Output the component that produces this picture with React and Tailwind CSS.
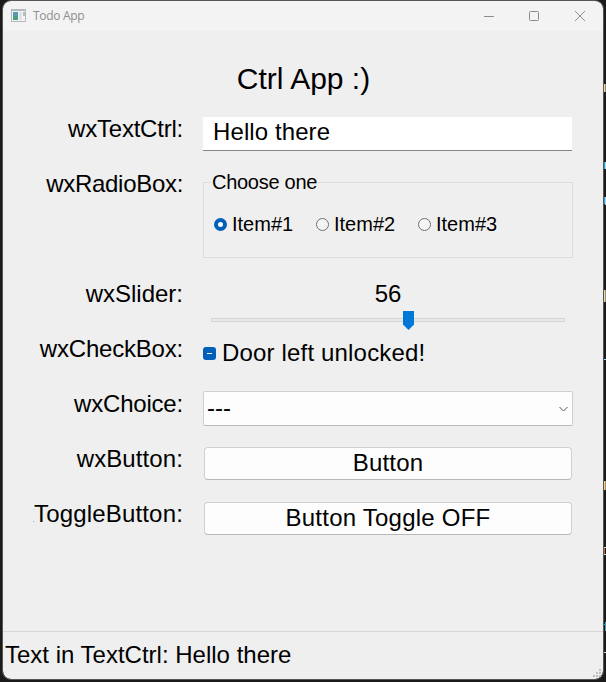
const ARIAL = "font-['Liberation_Sans',Arial,sans-serif]";

function Row({ label, className, labelClass = "", children }) {
  return (
    <div className={`flex ${className}`}>
      <div className="flex h-7 w-[150px] shrink-0 justify-end overflow-hidden whitespace-nowrap">
        <span className={`leading-7 ${labelClass}`}>{label}</span>
      </div>
      <div className="ml-5 w-[370px]">{children}</div>
    </div>
  );
}

function Radio({ label, checked, className = "" }) {
  return (
    <label className={`flex items-center ${className}`}>
      {checked ? (
        <span className="size-[13px] rounded-full border-4 border-[#005fb8] bg-white" />
      ) : (
        <span className="size-[13px] rounded-full border border-[#707070] bg-[#f5f5f5]" />
      )}
      <span className="ml-[5px] whitespace-nowrap">{label}</span>
    </label>
  );
}

function TitleBar() {
  return (
    <header className="flex h-[30px] items-center bg-[#f3f3f3] pl-2">
      <svg className="-mt-[2px]" width="15" height="13" viewBox="0 0 15 13" shapeRendering="crispEdges">
        <rect width="15" height="13" fill="#b3b9be" />
        <rect x="1" y="2" width="13" height="10" fill="#f4f4f4" />
        <rect x="2" y="3" width="5" height="8" fill="#5a98b4" />
        <rect x="2" y="7" width="5" height="4" fill="#4c9c86" />
        <rect x="8" y="3" width="3" height="8" fill="#dfe1e3" />
        <rect x="12" y="3" width="2" height="4" fill="#a5c5b5" />
      </svg>
      <span className="ml-[7px] font-['Open_Sans','Noto_Sans',sans-serif] text-[12px] tracking-[-0.3px] text-[#8f8f8f]">
        Todo App
      </span>
      <svg className="-mt-[2px] ml-auto mr-[17px]" width="103" height="12" viewBox="0 0 103 12" fill="none" stroke="#8c8c8c">
        <path d="M1 7.5h10" />
        <rect x="46.5" y="2.5" width="9" height="9" rx="1" />
        <path d="M92 2l10 10M102 2L92 12" />
      </svg>
    </header>
  );
}

// Slivers of the editor window that lies behind the right edge.
function EditorEdge() {
  return (
    <svg className="absolute right-0 top-0" width="2" height="682" shapeRendering="crispEdges">
      <path d="M0 84h1v8H0zM0 290h1v12H0z" fill="#c8dff0" />
      <path d="M1 84h1v8H1zM1 290h1v12H1zM1 481h1v9H1z" fill="#b38a3c" />
      <path d="M0 162h1v7H0zM0 197h1v7H0z" fill="#2f9fd6" />
      <path d="M1 162h1v7H1zM1 197h1v8H1zM0 359h2v1H0z" fill="#9fdcf0" />
      <path d="M0 481h1v9H0z" fill="#e8d2b0" />
      <path d="M0 547h2v1H0zM0 554h2v1H0zM0 652h2v1H0z" fill="#d8d8d0" />
      <path d="M0 548h1v6H0z" fill="#b06a4a" />
      <path d="M1 622h1v9H1zM0 624h1v1H0z" fill="#3aa0c0" />
    </svg>
  );
}

export default function App() {
  return (
    <div className={`relative h-[682px] w-[606px] overflow-hidden bg-[#1b1b1b] pl-[3px] pt-px ${ARIAL}`}>
      <EditorEdge />
      <div className="flex h-[678px] w-[600px] flex-col overflow-hidden rounded-lg bg-[#efefef] text-[24px] text-black outline outline-[#555]">
        <TitleBar />
        <main className="flex h-[600px] flex-col pl-[30px]">
          <h1 className="mt-[30px] h-9 w-[541px] text-center text-[30px] leading-9">Ctrl App :)</h1>
          <Row label="wxTextCtrl:" className="mt-[18px] h-[55px]" labelClass="tracking-[-0.22px]">
            <div className="mt-[2px] h-[34px] w-[369px] border-b border-[#868686] bg-white pl-[10px]">
              <div className="pt-px leading-7 tracking-[0.1px]">Hello there</div>
            </div>
          </Row>
          <Row label="wxRadioBox:" className="h-[110px]" labelClass="tracking-[-0.3px]">
            <fieldset className="h-[88px] border border-[#dcdcdc] pl-[10px] text-[20px]">
              <legend className="-ml-[3px] px-[1px] leading-[25px] tracking-[-0.28px]">Choose one</legend>
              <div className="mt-[17px] flex h-6 leading-6">
                <Radio label="Item#1" checked className="w-[102px]" />
                <Radio label="Item#2" className="w-[102px]" />
                <Radio label="Item#3" />
              </div>
            </fieldset>
          </Row>
          <Row label="wxSlider:" className="h-[55px]">
            <div className="text-center leading-7">56</div>
            <div className="mx-2 mt-[3px] flex h-[19px] items-start">
              <div className="mt-[7px] h-1 w-48 border border-r-0 border-[#d3d6d5] bg-[#e7eaea]" />
              <svg width="11" height="19" viewBox="0 0 11 19">
                <path d="M0 0h11v13.5L5.5 19 0 13.5z" fill="#0078d7" />
              </svg>
              <div className="mt-[7px] h-1 flex-1 border border-l-0 border-[#d3d6d5] bg-[#e7eaea]" />
            </div>
          </Row>
          <Row label="wxCheckBox:" className="h-[55px]" labelClass="tracking-[-0.2px]">
            <label className="mt-1 flex h-7 items-center">
              <span className="flex size-[13px] items-center justify-center rounded-[3px] bg-[#005fb8]">
                <span className="h-px w-[5px] bg-white" />
              </span>
              <span className="ml-[6px] whitespace-nowrap leading-7 tracking-[0.17px]">Door left unlocked!</span>
            </label>
          </Row>
          <Row label="wxChoice:" className="h-[55px]" labelClass="tracking-[-0.2px]">
            <div className="mt-px flex h-[35px] items-center justify-between rounded-[2px] border border-[#d0d0d0] border-b-[#b8b8b8] bg-[#fdfdfd] pl-[3px] pr-1">
              <span className="pb-px leading-7">---</span>
              <svg width="9" height="6" viewBox="0 0 9 6" fill="none" stroke="#555">
                <path d="M.5 1l4 4 4-4" />
              </svg>
            </div>
          </Row>
          <Row label="wxButton:" className="h-[55px]" labelClass="tracking-[0.1px]">
            <button className="ml-px mt-[2px] flex h-[33px] w-[368px] items-start justify-center rounded border border-[#d0d0d0] border-b-[#b8b8b8] bg-[#fdfdfd] pt-px leading-7 tracking-[0.15px]">
              Button
            </button>
          </Row>
          <Row label="wxToggleButton:" className="h-[55px]" labelClass="tracking-[0.17px]">
            <button className="ml-px mt-[2px] flex h-[33px] w-[368px] items-start justify-center rounded border border-[#d0d0d0] border-b-[#b8b8b8] bg-[#fdfdfd] pt-px leading-7 tracking-[0.23px]">
              Button Toggle OFF
            </button>
          </Row>
        </main>
        <footer className="relative h-12 border-t border-[#d7d7d7] pl-[2px] pt-[9px]">
          <div className="leading-7">Text in TextCtrl: Hello there</div>
          <svg className="absolute bottom-[2px] right-[2px]" width="8" height="8" fill="#bfbfbf">
            <path d="M6 0h2v2H6zM3 3h2v2H3zM6 3h2v2H6zM0 6h2v2H0zM3 6h2v2H3zM6 6h2v2H6z" />
          </svg>
        </footer>
      </div>
    </div>
  );
}
